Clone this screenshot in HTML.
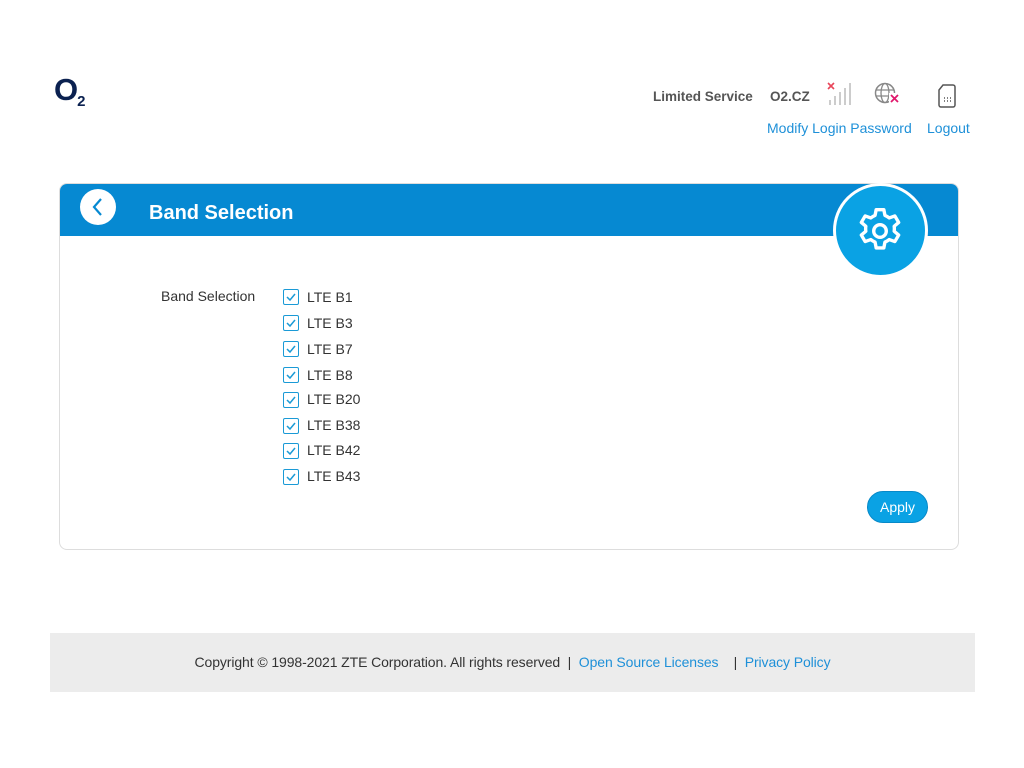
<!DOCTYPE html>
<html><head><meta charset="utf-8"><style>
*{margin:0;padding:0;box-sizing:border-box}
body{width:1024px;height:768px;background:#fff;font-family:"Liberation Sans",Arial,sans-serif;position:relative;overflow:hidden}
.a{position:absolute}
.link{color:#1e90d8;font-size:14px}
.cb{position:absolute;left:283px;width:16px;height:16px;border:1.5px solid #1a9ad6;border-radius:2px;background:#fff}
.cb svg{position:absolute;left:1px;top:1px}
.lb{position:absolute;left:307px;font-size:14px;color:#333}
</style></head><body>
<div class="a" style="left:54px;top:72px;font-size:31px;font-weight:bold;color:#0b2150;letter-spacing:-1px">O<span style="font-size:15px;position:relative;top:6px">2</span></div>
<div class="a" style="left:653px;top:89px;font-size:13.5px;font-weight:bold;color:#555">Limited Service</div>
<div class="a" style="left:770px;top:89px;font-size:13.5px;font-weight:bold;color:#555">O2.CZ</div>
<svg class="a" style="left:825px;top:81px" width="30" height="26">
<path d="M3 2l6 6M9 2l-6 6" stroke="#e8465a" stroke-width="1.6"/>
<path d="M5 24v-5M10 24v-9M15 24v-13M20 24v-17M25 24v-22" stroke="#ccc" stroke-width="2"/></svg>
<svg class="a" style="left:874px;top:82px" width="28" height="24">
<circle cx="11" cy="11" r="9.5" fill="none" stroke="#888" stroke-width="1.5"/>
<ellipse cx="11" cy="11" rx="4" ry="9.5" fill="none" stroke="#888" stroke-width="1.3"/>
<path d="M2 8h18M2 14h18" stroke="#888" stroke-width="1.3"/>
<rect x="15" y="11" width="12" height="12" fill="#fff"/>
<path d="M17 13l7 7M24 13l-7 7" stroke="#e0186c" stroke-width="1.8"/></svg>
<svg class="a" style="left:937px;top:84px" width="20" height="24">
<path d="M6 1h10a2 2 0 0 1 2 2v18a2 2 0 0 1-2 2H4a2 2 0 0 1-2-2V6z" fill="none" stroke="#555" stroke-width="1.5"/>
<path d="M7 14h1M10 14h1M13 14h1M7 17h1M10 17h1M13 17h1" stroke="#555" stroke-width="1.5"/></svg>
<div class="a link" style="left:767px;top:120px">Modify Login Password</div>
<div class="a link" style="left:927px;top:120px">Logout</div>

<div class="a" style="left:59px;top:183px;width:900px;height:367px;border:1px solid #ddd;border-radius:8px;overflow:hidden">
<div style="height:52px;background:#0689d2"></div></div>
<div class="a" style="left:80px;top:189px;width:36px;height:36px;border-radius:50%;background:#fff"></div>
<svg class="a" style="left:80px;top:189px" width="36" height="36"><path d="M21 10l-7 8 7 8" fill="none" stroke="#0689d2" stroke-width="2.2"/></svg>
<div class="a" style="left:149px;top:202px;font-size:20px;font-weight:bold;color:#fff">Band Selection</div>
<div class="a" style="left:833px;top:183px;width:95px;height:95px;border-radius:50%;background:#0aa2e4;border:3px solid #fff"></div>
<svg class="a" style="left:853px;top:204px" width="54" height="54" viewBox="0 0 24 24">
<path fill="none" stroke="#fff" stroke-width="1.5" stroke-linejoin="round" d="M10.3 2.5h3.4l.5 2.6a7.5 7.5 0 0 1 1.9 1.1l2.5-.9 1.7 2.9-2 1.7a7.5 7.5 0 0 1 0 2.2l2 1.7-1.7 2.9-2.5-.9a7.5 7.5 0 0 1-1.9 1.1l-.5 2.6h-3.4l-.5-2.6a7.5 7.5 0 0 1-1.9-1.1l-2.5.9-1.7-2.9 2-1.7a7.5 7.5 0 0 1 0-2.2l-2-1.7 1.7-2.9 2.5.9a7.5 7.5 0 0 1 1.9-1.1z"/>
<circle cx="12" cy="12" r="2.8" fill="none" stroke="#fff" stroke-width="1.5"/></svg>

<div class="a" style="left:161px;top:288px;font-size:14px;color:#333">Band Selection</div>
<div class="cb" style="top:289px"><svg width="12" height="12"><path d="M2 6l3 3 5-6" fill="none" stroke="#1a9ad6" stroke-width="1.5"/></svg></div><div class="lb" style="top:289px">LTE B1</div>
<div class="cb" style="top:315px"><svg width="12" height="12"><path d="M2 6l3 3 5-6" fill="none" stroke="#1a9ad6" stroke-width="1.5"/></svg></div><div class="lb" style="top:315px">LTE B3</div>
<div class="cb" style="top:341px"><svg width="12" height="12"><path d="M2 6l3 3 5-6" fill="none" stroke="#1a9ad6" stroke-width="1.5"/></svg></div><div class="lb" style="top:341px">LTE B7</div>
<div class="cb" style="top:367px"><svg width="12" height="12"><path d="M2 6l3 3 5-6" fill="none" stroke="#1a9ad6" stroke-width="1.5"/></svg></div><div class="lb" style="top:367px">LTE B8</div>
<div class="cb" style="top:392px"><svg width="12" height="12"><path d="M2 6l3 3 5-6" fill="none" stroke="#1a9ad6" stroke-width="1.5"/></svg></div><div class="lb" style="top:391px">LTE B20</div>
<div class="cb" style="top:418px"><svg width="12" height="12"><path d="M2 6l3 3 5-6" fill="none" stroke="#1a9ad6" stroke-width="1.5"/></svg></div><div class="lb" style="top:417px">LTE B38</div>
<div class="cb" style="top:443px"><svg width="12" height="12"><path d="M2 6l3 3 5-6" fill="none" stroke="#1a9ad6" stroke-width="1.5"/></svg></div><div class="lb" style="top:442px">LTE B42</div>
<div class="cb" style="top:469px"><svg width="12" height="12"><path d="M2 6l3 3 5-6" fill="none" stroke="#1a9ad6" stroke-width="1.5"/></svg></div><div class="lb" style="top:468px">LTE B43</div>

<div class="a" style="left:867px;top:491px;width:61px;height:32px;border-radius:16px;background:#0aa2e4;border:1px solid #0789c8;color:#fff;font-size:14px;text-align:center;line-height:30px">Apply</div>

<div class="a" style="left:50px;top:633px;width:925px;height:59px;background:#ececec;text-align:center;line-height:59px;font-size:14px;color:#333;letter-spacing:-0.1px">Copyright © 1998-2021 ZTE Corporation. All rights reserved &nbsp;|&nbsp; <span style="color:#1e90d8">Open Source Licenses</span> &nbsp; &nbsp;| &nbsp;<span style="color:#1e90d8">Privacy Policy</span></div>
</body></html>
